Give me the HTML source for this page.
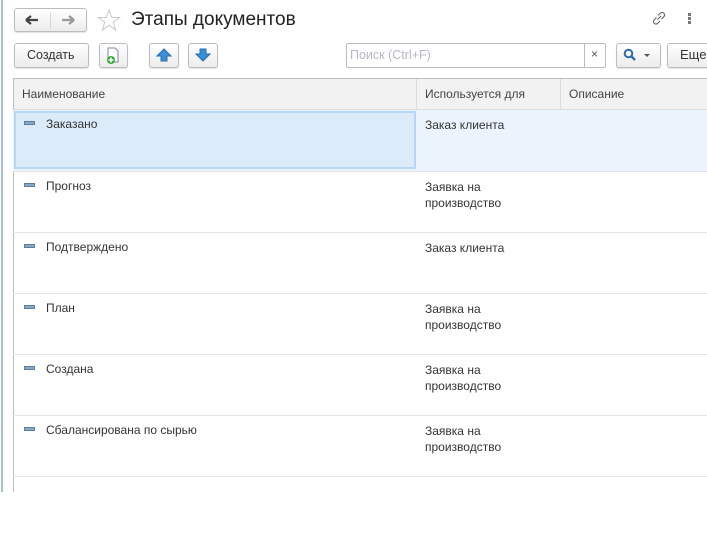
<!DOCTYPE html>
<html><head><meta charset="utf-8"><style>
*{box-sizing:border-box;margin:0;padding:0}
body{width:707px;height:492px;overflow:hidden;background:#fff;font-family:"Liberation Sans",Arial,sans-serif;font-size:12px;color:#333;position:relative}
.abs{position:absolute}
.btn{position:absolute;border:1px solid #bdbdbd;border-radius:3px;background:linear-gradient(#fff,#ececec);box-shadow:0 1px 1px rgba(0,0,0,.12)}
.row{position:absolute;left:13px;width:694px;height:61px;border-top:1px solid #e3e3e3}
.n{position:absolute;left:33px;top:7px;font-size:12px;color:#333}
.u{position:absolute;left:412px;top:7px;line-height:16px;color:#333}
.m{position:absolute;left:11px;top:11px;width:11px;height:4px;background:#8aa8c4;border:1px solid #5d7f9f}
</style></head><body>
<div class="abs" style="left:1px;top:0;width:2px;height:492px;background:#a8bed2"></div>
<div class="btn" style="left:14px;top:8px;width:73px;height:24px"></div>
<div class="abs" style="left:50px;top:12px;width:1px;height:17px;background:#d6d6d6"></div>
<svg class="abs" style="left:24px;top:13px" width="16" height="14"><path d="M2 7H14M2 7L7 3M2 7L7 11" stroke="#444" stroke-width="2.2" fill="none"/></svg>
<svg class="abs" style="left:60px;top:13px" width="16" height="14"><path d="M2 7H14M14 7L9 3M14 7L9 11" stroke="#999" stroke-width="2.2" fill="none"/></svg>
<svg class="abs" style="left:97px;top:9px" width="24" height="22"><path d="M12 1L14.8 8.5 22.5 8.5 16.3 13.2 18.6 21 12 16.3 5.4 21 7.7 13.2 1.5 8.5 9.2 8.5Z" fill="none" stroke="#c8c8c8" stroke-width="1"/></svg>
<div class="abs" style="left:131px;top:9px;font-size:19px;color:#222">Этапы документов</div>
<svg class="abs" style="left:650px;top:9px" width="18" height="18"><path d="M7.5 10.5L11 7M6.5 8.5L4 11a2.5 2.5 0 0 0 3.5 3.5L10 12M11.5 10L14 7.5a2.5 2.5 0 0 0-3.5-3.5L8 6.5" stroke="#666" stroke-width="1.1" fill="none"/></svg>
<div class="abs" style="left:688px;top:13px;width:3px;height:3px;background:#777;box-shadow:0 4px 0 #777,0 8px 0 #777"></div>
<div class="btn" style="left:14px;top:43px;width:75px;height:25px"></div>
<div class="abs" style="left:27px;top:48px;font-size:12.5px;color:#333">Создать</div>
<div class="btn" style="left:99px;top:43px;width:29px;height:25px"></div>
<svg class="abs" style="left:105px;top:47px" width="16" height="18"><path d="M3 1H10L13 4V15H3Z" fill="#fff" stroke="#7a8a9a"/><circle cx="6" cy="13" r="4" fill="#3aa83a"/><path d="M6 10.5V15.5M3.5 13H8.5" stroke="#fff" stroke-width="1.5"/></svg>
<div class="btn" style="left:149px;top:43px;width:30px;height:25px"></div>
<svg class="abs" style="left:156px;top:47px" width="16" height="16"><path d="M8 2L15 9H11V14H5V9H1Z" fill="#3a8fd8" stroke="#2a6eb0"/></svg>
<div class="btn" style="left:188px;top:43px;width:30px;height:25px"></div>
<svg class="abs" style="left:195px;top:47px" width="16" height="16"><path d="M8 14L15 7H11V2H5V7H1Z" fill="#3a8fd8" stroke="#2a6eb0"/></svg>
<div class="abs" style="left:346px;top:43px;width:260px;height:25px;border:1px solid #bdbdbd;border-radius:2px;background:#fff"></div>
<div class="abs" style="left:584px;top:43px;width:1px;height:25px;background:#bdbdbd"></div>
<div class="abs" style="left:350px;top:48px;color:#b8b8c8;font-size:12.5px">Поиск (Ctrl+F)</div>
<div class="abs" style="left:591px;top:47px;color:#555;font-size:12px">×</div>
<div class="btn" style="left:616px;top:43px;width:45px;height:25px"></div>
<svg class="abs" style="left:623px;top:48px" width="14" height="14"><circle cx="5.5" cy="5.5" r="3.8" fill="none" stroke="#2b6cb0" stroke-width="2"/><path d="M8.5 8.5L12 12" stroke="#2b6cb0" stroke-width="2.4"/></svg>
<div class="abs" style="left:644px;top:54px;border:3px solid transparent;border-top:3px solid #555"></div>
<div class="btn" style="left:667px;top:43px;width:50px;height:25px"></div>
<div class="abs" style="left:680px;top:47px;font-size:13px;color:#333">Еще</div>
<div class="abs" style="left:13px;top:78px;width:694px;height:414px;border:1px solid #bdbdbd;border-right:none;border-bottom:none"></div>
<div class="abs" style="left:14px;top:79px;width:693px;height:31px;background:#f2f2f2;border-bottom:1px solid #ddd"></div>
<div class="abs" style="left:416px;top:79px;width:1px;height:31px;background:#ddd"></div>
<div class="abs" style="left:560px;top:79px;width:1px;height:31px;background:#ddd"></div>
<div class="abs" style="left:22px;top:87px;color:#444">Наименование</div>
<div class="abs" style="left:425px;top:87px;color:#444">Используется для</div>
<div class="abs" style="left:569px;top:87px;color:#444">Описание</div>
<div class="row" style="top:110px;background:#ebf4fc;border-top:none"></div>
<div class="abs" style="left:14px;top:111px;width:402px;height:58px;background:#dcebfa;border:2px solid #b6d7f2"></div>
<div class="row" style="top:110px;border:none"><div class="m"></div><div class="n">Заказано</div><div class="u">Заказ клиента</div></div>
<div class="row" style="top:171px"><div class="m"></div><div class="n">Прогноз</div><div class="u">Заявка на<br>производство</div></div>
<div class="row" style="top:232px"><div class="m"></div><div class="n">Подтверждено</div><div class="u">Заказ клиента</div></div>
<div class="row" style="top:293px"><div class="m"></div><div class="n">План</div><div class="u">Заявка на<br>производство</div></div>
<div class="row" style="top:354px"><div class="m"></div><div class="n">Создана</div><div class="u">Заявка на<br>производство</div></div>
<div class="row" style="top:415px"><div class="m"></div><div class="n">Сбалансирована по сырью</div><div class="u">Заявка на<br>производство</div></div>
<div class="row" style="top:476px"></div>
</body></html>
